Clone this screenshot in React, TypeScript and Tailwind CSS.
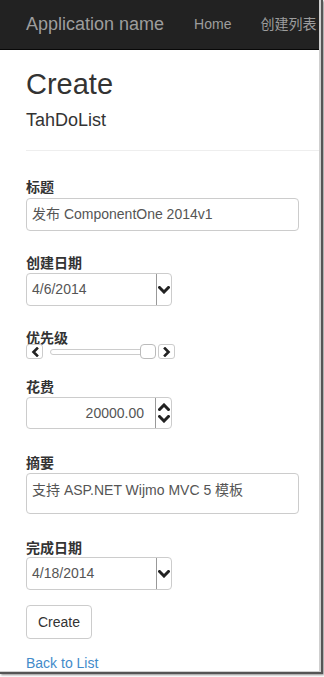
import React from "react";

const FONT = { fontFamily: '"Liberation Sans", Arial, "Noto Sans CJK SC", sans-serif' };

function ChevronDown({ w = 12, h = 8 }: { w?: number; h?: number }) {
  return (
    <svg width={w} height={h} viewBox="0 0 12 8">
      <path d="M1.5 1.5 L6 6 L10.5 1.5" fill="none" stroke="#222" strokeWidth="3" strokeLinecap="square" />
    </svg>
  );
}
function ChevronUp({ w = 12, h = 8 }: { w?: number; h?: number }) {
  return (
    <svg width={w} height={h} viewBox="0 0 12 8">
      <path d="M1.5 6.5 L6 2 L10.5 6.5" fill="none" stroke="#222" strokeWidth="3" strokeLinecap="square" />
    </svg>
  );
}
function ChevronLeft() {
  return (
    <svg width="8" height="10" viewBox="0 0 8 10">
      <path d="M6 1.5 L2.5 5 L6 8.5" fill="none" stroke="#222" strokeWidth="2.6" strokeLinecap="square" />
    </svg>
  );
}
function ChevronRight() {
  return (
    <svg width="8" height="10" viewBox="0 0 8 10">
      <path d="M2 1.5 L5.5 5 L2 8.5" fill="none" stroke="#222" strokeWidth="2.6" strokeLinecap="square" />
    </svg>
  );
}

function Label({ children, className = "" }: { children: React.ReactNode; className?: string }) {
  return <div className={"h-[16px] leading-[16px] text-[14px] font-bold text-[#333] " + className}>{children}</div>;
}

function DateBox({ value, className = "" }: { value: string; className?: string }) {
  return (
    <div className={"flex w-[146px] h-[33px] border border-[#ccc] rounded-[4px] bg-white " + className}>
      <div className="flex-1 flex items-center pl-[5px] text-[14px] text-[#555]">{value}</div>
      <div className="w-[15px] border-l border-[#999] flex items-center justify-center">
        <ChevronDown />
      </div>
    </div>
  );
}

export default function App() {
  return (
    <div className="w-[324px] h-[677px] bg-white" style={FONT}>
      <div className="w-[323px] h-[674px] border-r-2 border-b-2 border-[#555] shadow-[1px_1px_2px_rgba(0,0,0,0.45)]">
        <div className="w-[321px] h-[672px] border-r-2 border-b border-[#cfcfcf] overflow-hidden">
          <div className="w-[319px] h-[671px] overflow-hidden">
            {/* Navbar */}
            <div className="h-[50px] bg-[#222] border-b border-[#080808] flex items-center pl-[26px]">
              <span className="text-[18px] text-[#9d9d9d] whitespace-nowrap">Application name</span>
              <span className="ml-[30px] text-[14px] text-[#9d9d9d] whitespace-nowrap">Home</span>
              <span className="ml-[29px] text-[14px] text-[#9d9d9d] whitespace-nowrap">创建列表</span>
            </div>

            <div className="pl-[26px]">
              <div className="mt-[18px] text-[29px] leading-[32px] text-[#333]">Create</div>
              <div className="mt-[10px] text-[18px] leading-[20px] text-[#333]">TahDoList</div>
              <div className="mt-[20px] border-t border-[#eee]" />

              <Label className="mt-[28px]">标题</Label>
              <div className="mt-[3px] w-[273px] h-[33px] border border-[#ccc] rounded-[4px] flex items-center pl-[5px] text-[14px] text-[#555] whitespace-nowrap">
                发布 ComponentOne 2014v1
              </div>

              <Label className="mt-[24px]">创建日期</Label>
              <DateBox value="4/6/2014" className="mt-[2px]" />

              <Label className="mt-[24px]">优先级</Label>
              <div className="mt-[-2px] flex items-center h-[15px]">
                <div className="w-[17px] h-[15px] border border-[#ccc] rounded-[3px] flex items-center justify-center">
                  <ChevronLeft />
                </div>
                <div className="relative ml-[7px] w-[106px] h-[15px] flex items-center">
                  <div className="w-full h-[6px] border border-[#ccc] rounded-full" />
                  <div className="absolute right-0 top-0 w-[16px] h-[15px] bg-white border border-[#bbb] rounded-[4px]" />
                </div>
                <div className="ml-[2px] w-[17px] h-[15px] border border-[#ccc] rounded-[3px] flex items-center justify-center">
                  <ChevronRight />
                </div>
              </div>

              <Label className="mt-[20px]">花费</Label>
              <div className="mt-[2px] flex w-[146px] h-[32px] border border-[#ccc] rounded-[4px]">
                <div className="flex-1 flex items-center justify-end pr-[11px] text-[14px] text-[#555]">20000.00</div>
                <div className="w-[16px] border-l border-[#999] flex flex-col items-center justify-center gap-[4px]">
                  <ChevronUp />
                  <ChevronDown />
                </div>
              </div>

              <Label className="mt-[26px]">摘要</Label>
              <div className="mt-[2px] w-[273px] h-[41px] border border-[#ccc] rounded-[4px] pl-[5px] pt-[6px] text-[14px] leading-[20px] text-[#555] whitespace-nowrap">
                支持 ASP.NET Wijmo MVC 5 模板
              </div>

              <Label className="mt-[26px]">完成日期</Label>
              <DateBox value="4/18/2014" className="mt-[1px]" />

              <div className="mt-[15px] w-[66px] h-[34px] border border-[#ccc] rounded-[4px] flex items-center justify-center text-[14px] text-[#333]">
                Create
              </div>

              <div className="mt-[16px] h-[16px] leading-[16px] text-[14px] text-[#428bca]">Back to List</div>
            </div>
          </div>
        </div>
      </div>
    </div>
  );
}
